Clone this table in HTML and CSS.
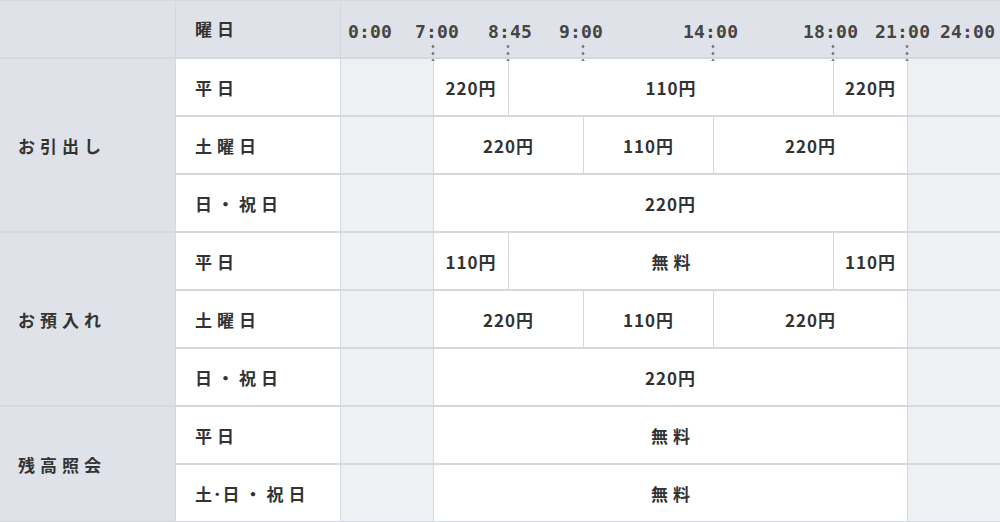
FILE: index.html
```html
<!DOCTYPE html>
<html lang="ja">
<head>
<meta charset="utf-8">
<title>ATM手数料</title>
<link rel="stylesheet" href="styles.css">
</head>
<body>
<div class="fee-table">
  <div class="cell head corner"></div>
  <div class="cell head day">曜日</div>
  <div class="cell head timeline">
    <span class="tlabel" style="left:7px">0:00</span>
    <span class="tlabel" style="left:74px">7:00</span>
    <span class="tlabel" style="left:147px">8:45</span>
    <span class="tlabel" style="left:218px">9:00</span>
    <span class="tlabel" style="left:342px">14:00</span>
    <span class="tlabel" style="left:462px">18:00</span>
    <span class="tlabel" style="left:534px">21:00</span>
    <span class="tlabel" style="left:599px">24:00</span>
    <span class="tick" style="left:92px"></span>
    <span class="tick" style="left:167px"></span>
    <span class="tick" style="left:242px"></span>
    <span class="tick" style="left:372px"></span>
    <span class="tick" style="left:492px"></span>
    <span class="tick" style="left:566px"></span>
  </div>

  <!-- お引出し -->
  <div class="cell cat r3">お引出し</div>
  <div class="cell day">平日</div>
  <div class="cell off"></div>
  <div class="cell fee">220円</div>
  <div class="cell fee s3">110円</div>
  <div class="cell fee">220円</div>
  <div class="cell off"></div>

  <div class="cell day">土曜日</div>
  <div class="cell off"></div>
  <div class="cell fee s2">220円</div>
  <div class="cell fee">110円</div>
  <div class="cell fee s2">220円</div>
  <div class="cell off"></div>

  <div class="cell day">日・祝日</div>
  <div class="cell off"></div>
  <div class="cell fee s5">220円</div>
  <div class="cell off"></div>

  <!-- お預入れ -->
  <div class="cell cat r3">お預入れ</div>
  <div class="cell day">平日</div>
  <div class="cell off"></div>
  <div class="cell fee">110円</div>
  <div class="cell fee free s3">無料</div>
  <div class="cell fee">110円</div>
  <div class="cell off"></div>

  <div class="cell day">土曜日</div>
  <div class="cell off"></div>
  <div class="cell fee s2">220円</div>
  <div class="cell fee">110円</div>
  <div class="cell fee s2">220円</div>
  <div class="cell off"></div>

  <div class="cell day">日・祝日</div>
  <div class="cell off"></div>
  <div class="cell fee s5">220円</div>
  <div class="cell off"></div>

  <!-- 残高照会 -->
  <div class="cell cat r2">残高照会</div>
  <div class="cell day">平日</div>
  <div class="cell off"></div>
  <div class="cell fee free s5">無料</div>
  <div class="cell off"></div>

  <div class="cell day"><span class="tight">土･</span>日・祝日</div>
  <div class="cell off"></div>
  <div class="cell fee free s5">無料</div>
  <div class="cell off"></div>
</div>
</body>
</html>
```

FILE: styles.css
```css
* {
  box-sizing: border-box;
}

html, body {
  margin: 0;
  padding: 0;
  background: #ffffff;
}

.fee-table {
  width: 1000px;
  height: 522px;
  display: grid;
  grid-template-columns: 175px 164px 92px 74px 74px 129px 119px 73px 92px;
  grid-template-rows: 56px repeat(8, 56px);
  column-gap: 1px;
  row-gap: 2px;
  padding: 1px 0;
  background: #d5d8de;
  font-family: "Noto Sans CJK JP", "Noto Sans", sans-serif;
  color: #333333;
}

.cell {
  display: flex;
  align-items: center;
  font-size: 17px;
  font-weight: 700;
  background: #ffffff;
}

.head {
  background: #dfe2e8;
}

.corner {
  grid-column: 1;
}

.day {
  padding-left: 19px;
  letter-spacing: 5px;
}

.day .tight {
  letter-spacing: 1px;
}

.head.day {
  padding-bottom: 2px;
}

.timeline {
  grid-column: 3 / -1;
  position: relative;
}

.tlabel {
  position: absolute;
  top: 20px;
  font-family: "DejaVu Sans Mono", "Liberation Mono", monospace;
  font-size: 18px;
  font-weight: 700;
  line-height: 22px;
  color: #454545;
  letter-spacing: 0.2px;
  white-space: nowrap;
}

.tick {
  position: absolute;
  top: 42px;
  width: 4px;
  height: 18px;
  margin-left: -2px;
  background-image: radial-gradient(circle, #858585 1.3px, transparent 1.8px);
  background-size: 4px 7px;
  background-position: 0 0;
  background-repeat: repeat-y;
}

.cat {
  grid-column: 1;
  background: #dfe2e8;
  padding-left: 18px;
  letter-spacing: 5px;
}

.r3 {
  grid-row: span 3;
}

.r2 {
  grid-row: span 2;
}

.off {
  background: #eef0f3;
}

.fee {
  justify-content: center;
  letter-spacing: 1px;
  font-size: 17px;
}

.fee.free {
  letter-spacing: 5px;
  padding-left: 5px;
}

.s2 {
  grid-column: span 2;
}

.s3 {
  grid-column: span 3;
}

.s5 {
  grid-column: span 5;
}
```
